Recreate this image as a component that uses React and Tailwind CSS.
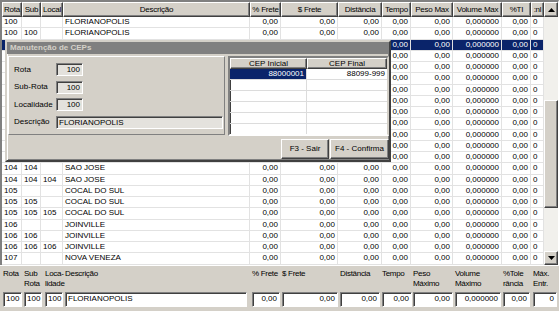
import React from "react";

const cols = [
  { w: "w-[20px]", label: "Rota", right: false },
  { w: "w-[19px]", label: "Sub", right: false },
  { w: "w-[22px]", label: "Local", right: false },
  { w: "w-[187px]", label: "Descrição", right: false },
  { w: "w-[31px]", label: "% Frete", right: true },
  { w: "w-[57px]", label: "$ Frete", right: true },
  { w: "w-[44px]", label: "Distância", right: true },
  { w: "w-[29px]", label: "Tempo", right: true },
  { w: "w-[42px]", label: "Peso Max", right: true },
  { w: "w-[49px]", label: "Volume Max", right: true },
  { w: "w-[29px]", label: "%TI", right: true },
  { w: "w-[13px]", label: ":nl", right: false },
];

const cities = [
  ["100", "FLORIANOPOLIS"],
  ["101", "PALHOCA"],
  ["102", "BIGUACU"],
  ["103", "TIJUCAS"],
  ["104", "SAO JOSE"],
  ["105", "COCAL DO SUL"],
  ["106", "JOINVILLE"],
];

const rows = [];
cities.forEach(([c, name]) => {
  rows.push([c, "", "", name]);
  rows.push([c, c, "", name]);
  rows.push([c, c, c, name]);
});
rows.push(["107", "", "", "NOVA VENEZA"]);

const nums = ["0,00", "0,00", "0,00", "0,00", "0,00", "0,000000", "0,00", "0"];

const fields = [
  { cls: "ml-[3px] w-[19px]", l1: "Rota", l2: "", v: "100", right: false },
  { cls: "ml-[2px] w-[18px]", l1: "Sub", l2: "Rota", v: "100", right: false },
  { cls: "ml-[3px] w-[18px]", l1: "Loca-", l2: "lidade", v: "100", right: false },
  { cls: "ml-[2px] w-[182px]", l1: "Descrição", l2: "", v: "FLORIANOPOLIS", right: false },
  { cls: "ml-[5px] w-[28px]", l1: "% Frete", l2: "", v: "0,00", right: true },
  { cls: "ml-[2px] w-[56px]", l1: "$ Frete", l2: "", v: "0,00", right: true },
  { cls: "ml-[2px] w-[40px]", l1: "Distância", l2: "", v: "0,00", right: true },
  { cls: "ml-[2px] w-[30px]", l1: "Tempo", l2: "", v: "0,00", right: true },
  { cls: "ml-[1px] w-[40px]", l1: "Peso", l2: "Máximo", v: "0,00", right: true },
  { cls: "ml-[2px] w-[46px]", l1: "Volume", l2: "Máximo", v: "0,000000", right: true },
  { cls: "ml-[2px] w-[27px]", l1: "%Tole", l2: "rância", v: "0,00", right: true },
  { cls: "ml-[3px] w-[24px]", l1: "Máx.", l2: "Entr.", v: "0", right: true },
];

const raised = "border border-t-white border-l-white border-b-[#404040] border-r-[#404040] shadow-[inset_-1px_-1px_0_#808080]";
const sunken = "border border-t-[#808080] border-l-[#808080] border-b-white border-r-white shadow-[inset_1px_1px_0_#404040]";

function Arrow({ up }) {
  return (
    <svg width="7" height="4" viewBox="0 0 7 4">
      <polygon points={up ? "3.5,0 7,4 0,4" : "0,0 7,0 3.5,4"} fill="#000" />
    </svg>
  );
}

function Dialog() {
  const labels = [
    ["Rota", "100"],
    ["Sub-Rota", "100"],
    ["Localidade", "100"],
  ];
  return (
    <div className="absolute left-[5px] top-[40px] w-[386px] h-[122px] bg-[#d4d0c8] border-2 border-t-[#d4d0c8] border-l-[#d4d0c8] border-b-[#404040] border-r-[#404040] shadow-[inset_1px_1px_0_white,inset_-1px_-1px_0_#808080] flex flex-col">
      <div className="h-[12px] bg-[#808080] text-[#d4d0c8] font-bold text-[8px] leading-[12px] pl-[3px]">
        Manutenção de CEPs
      </div>
      <div className="flex mt-[2px] pl-[1px]">
        <div className="w-[217px] h-[79px] border border-t-white border-l-white border-b-[#808080] border-r-[#808080] pl-[5px] pt-[6px] flex flex-col gap-[4.5px]">
          {labels.map(([l, v]) => (
            <div key={l} className="flex items-center h-[13px]">
              <span className="w-[42px] whitespace-nowrap">{l}</span>
              <div className={`w-[27px] h-[13px] bg-[#e4e2dd] text-right pr-[2px] leading-[11px] ${sunken}`}>{v}</div>
            </div>
          ))}
          <div className="flex items-center h-[13px]">
            <span className="w-[42px]">Descrição</span>
            <div className={`w-[167px] h-[13px] bg-[#e4e2dd] pl-[2px] leading-[11px] ${sunken}`}>FLORIANOPOLIS</div>
          </div>
        </div>
        <div className="ml-[3px] w-[161px] h-[80px] bg-white border-2 border-t-[#808080] border-l-[#808080] border-b-white border-r-[#d4d0c8] shadow-[inset_1px_1px_0_#404040] overflow-hidden">
          <div className="flex h-[11px]">
            <div className={`w-[77px] bg-[#d4d0c8] text-center leading-[9px] ${raised}`}>CEP Inicial</div>
            <div className={`w-[80px] bg-[#d4d0c8] text-center leading-[9px] ${raised}`}>CEP Final</div>
          </div>
          {[0, 1, 2, 3, 4, 5].map((i) => (
            <div key={i} className="flex h-[11px] border-b border-[#dcdcdc]">
              <div className={`w-[77px] border-r border-[#dcdcdc] text-right pr-[2px] leading-[10px] ${i === 0 ? "bg-[#0a246a] text-white" : ""}`}>
                {i === 0 ? "88000001" : ""}
              </div>
              <div className="w-[80px] text-right pr-[2px] leading-[10px]">{i === 0 ? "88099-999" : ""}</div>
            </div>
          ))}
        </div>
      </div>
      <div className="flex justify-end gap-[1px] mt-[3px]">
        <div className={`w-[48px] h-[20px] bg-[#d4d0c8] flex items-center justify-center ${raised}`}>F3 - Sair</div>
        <div className={`w-[59px] h-[20px] bg-[#d4d0c8] flex items-center justify-center ${raised}`}>F4 - Confirma</div>
      </div>
    </div>
  );
}

export default function App() {
  return (
    <div className="relative w-[559px] h-[311px] overflow-hidden bg-[#d4d0c8] text-black text-[8px] font-['Liberation_Sans',Arial,sans-serif]">
      <div className="h-[265px] flex border-t-2 border-l-2 border-r border-t-[#808080] border-l-[#808080] border-r-white">
        <div className="w-[542px] bg-white flex flex-col">
          <div className="flex h-[15px] bg-[#d4d0c8] tracking-[-0.25px]">
            {cols.map((c) => (
              <div key={c.label} className={`${c.w} flex items-center justify-center overflow-hidden whitespace-nowrap ${raised}`}>
                {c.label}
              </div>
            ))}
          </div>
          {rows.map((r, i) => {
            const vals = [...r, ...nums];
            const sel = i === 2;
            // rows 2..12 are hidden behind the dialog on the left-hand columns
            const covered = i >= 2 && i <= 12;
            return (
              <div key={i} className={`flex h-[11.25px] border-b border-[#e2e2e2] ${sel ? "bg-[#0a246a] text-white" : ""}`}>
                {cols.map((c, j) => (
                  <div
                    key={j}
                    className={`${c.w} border-r border-[#e2e2e2] overflow-hidden whitespace-nowrap leading-[10px] ${c.right ? "text-right pr-[2px]" : "pl-[2px]"}`}
                  >
                    {covered && j < 7 ? "" : vals[j]}
                  </div>
                ))}
              </div>
            );
          })}
        </div>
        <div className="w-[14px] flex flex-col bg-[#f1f0ec]">
          <div className={`h-[15px] bg-[#d4d0c8] flex items-center justify-center ${raised}`}>
            <Arrow up />
          </div>
          <div className="h-[83px]" />
          <div className={`h-[108px] bg-[#d4d0c8] ${raised}`} />
          <div className="flex-1" />
          <div className={`h-[14px] bg-[#d4d0c8] flex items-center justify-center ${raised}`}>
            <Arrow />
          </div>
        </div>
      </div>
      <div className="h-[46px] border-t border-white pt-[3px]">
        <div className="flex">
          {fields.map((f) => (
            <div key={f.l1} className={`${f.cls} flex flex-col`}>
              <div className="h-[20px] leading-[10px] whitespace-nowrap tracking-[-0.3px]">
                <div>{f.l1}</div>
                <div>{f.l2}</div>
              </div>
              <div className={`mt-[3px] h-[15px] bg-white leading-[12px] whitespace-nowrap overflow-hidden ${f.right ? "text-right pr-[2px]" : "pl-[2px]"} ${sunken}`}>
                {f.v}
              </div>
            </div>
          ))}
        </div>
      </div>
      <Dialog />
    </div>
  );
}
